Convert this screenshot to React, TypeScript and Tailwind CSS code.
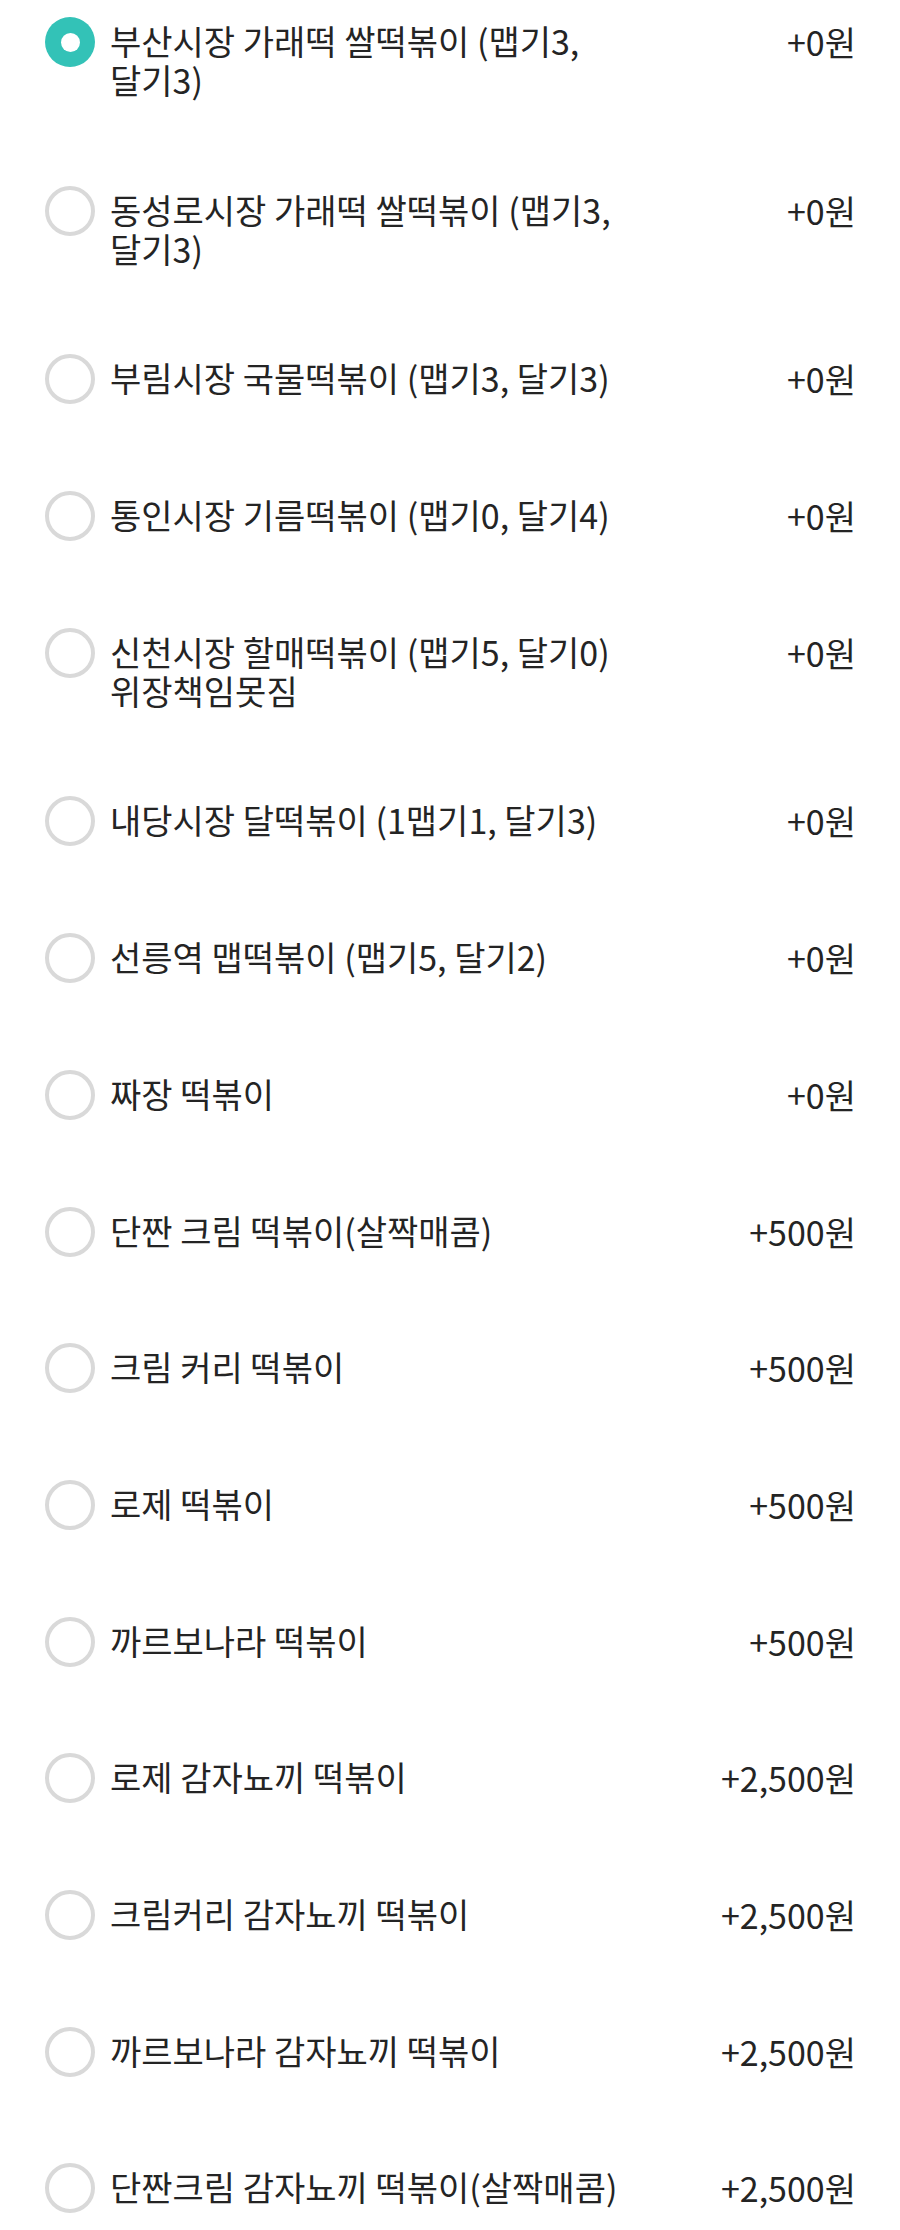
import { useState } from 'react'

type Option = { label: string; price: string }

const OPTIONS: Option[] = [
  { label: '부산시장 가래떡 쌀떡볶이 (맵기3, 달기3)', price: '+0원' },
  { label: '동성로시장 가래떡 쌀떡볶이 (맵기3, 달기3)', price: '+0원' },
  { label: '부림시장 국물떡볶이 (맵기3, 달기3)', price: '+0원' },
  { label: '통인시장 기름떡볶이 (맵기0, 달기4)', price: '+0원' },
  { label: '신천시장 할매떡볶이 (맵기5, 달기0) 위장책임못짐', price: '+0원' },
  { label: '내당시장 달떡볶이 (1맵기1, 달기3)', price: '+0원' },
  { label: '선릉역 맵떡볶이 (맵기5, 달기2)', price: '+0원' },
  { label: '짜장 떡볶이', price: '+0원' },
  { label: '단짠 크림 떡볶이(살짝매콤)', price: '+500원' },
  { label: '크림 커리 떡볶이', price: '+500원' },
  { label: '로제 떡볶이', price: '+500원' },
  { label: '까르보나라 떡볶이', price: '+500원' },
  { label: '로제 감자뇨끼 떡볶이', price: '+2,500원' },
  { label: '크림커리 감자뇨끼 떡볶이', price: '+2,500원' },
  { label: '까르보나라 감자뇨끼 떡볶이', price: '+2,500원' },
  { label: '단짠크림 감자뇨끼 떡볶이(살짝매콤)', price: '+2,500원' },
]

function Radio({ checked }: { checked: boolean }) {
  return checked ? (
    <span className="flex h-[50px] w-[50px] shrink-0 items-center justify-center rounded-full bg-[#33c2b7]">
      <span className="h-[19px] w-[19px] rounded-full bg-white" />
    </span>
  ) : (
    <span className="h-[50px] w-[50px] shrink-0 rounded-full border-[4px] border-[#d9d9d9] bg-white" />
  )
}

export default function App() {
  const [selected, setSelected] = useState(0)

  return (
    <div
      className="min-h-[2230px] w-[900px] bg-white pt-[17px] text-[#242424]"
      style={{ fontFamily: '"Noto Sans CJK KR", "Noto Sans", sans-serif' }}
    >
      {OPTIONS.map((o, i) => (
        <div
          key={o.label}
          onClick={() => setSelected(i)}
          className="flex cursor-pointer items-start pb-[86.7px] pl-[45px] pr-[44px]"
        >
          <Radio checked={selected === i} />
          <div className="ml-[15px] w-[530px] break-keep pt-[4px] text-[34px] leading-[39px]">{o.label}</div>
          <div className="flex-1 pt-[5px] text-right text-[34px] leading-[39px]">{o.price}</div>
        </div>
      ))}
    </div>
  )
}
